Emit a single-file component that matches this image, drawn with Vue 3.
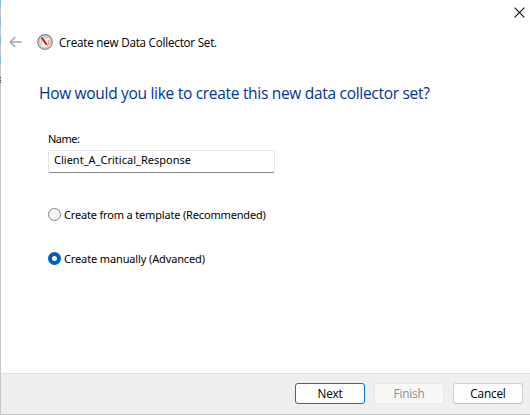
<script setup>
import { ref } from 'vue'

const name = ref('Client_A_Critical_Response')
const mode = ref('manual')
const options = [
  { id: 'template', label: 'Create from a template (Recommended)' },
  { id: 'manual', label: 'Create manually (Advanced)' },
]
</script>

<template>
  <div class="window">
    <div class="edge"></div>
    <main class="dialog">
      <div class="titlebar">
        <svg class="close" width="11" height="11" viewBox="0 0 11 11"><path d="M.6.6l9.8 9.8M10.4.6L.6 10.4" /></svg>
      </div>
      <header class="header">
        <svg class="back" width="13" height="12" viewBox="0 0 13 12"><path d="M12.5 6H1.2M6.2 1L1.2 6l5 5" /></svg>
        <svg class="gauge" width="16" height="16" viewBox="0 0 16 16">
          <circle cx="8" cy="8" r="7.3" fill="#e2e2e2" stroke="#828282" stroke-width="1.2" />
          <circle cx="8" cy="8" r="5.4" fill="#fffdfa" stroke="#b9b4ae" stroke-width=".8" />
          <path d="M4.3 10.8V6.2M6.8 4h3.1" fill="none" stroke="#c9a79a" stroke-width=".9" />
          <path d="M11.8 6.2v3.3l-1.6 1.8" fill="none" stroke="#ec8b4c" stroke-width="1.2" />
          <path d="M3.6 3.8l2.1-.5 4.8 7-1.7.9z" fill="#d40d12" />
        </svg>
        <span class="title">Create new Data Collector Set.</span>
      </header>
      <section class="body">
        <h1>How would you like to create this new data collector set?</h1>
        <label class="name" for="set-name">Name:</label>
        <input id="set-name" v-model="name" class="field" type="text" spellcheck="false" />
        <div class="options">
          <label v-for="o in options" :key="o.id" class="option">
            <input v-model="mode" type="radio" name="mode" :value="o.id" class="radio" />
            <span :class="['caption', o.id]">{{ o.label }}</span>
          </label>
        </div>
      </section>
      <footer class="footer">
        <button class="btn primary">Next</button>
        <button class="btn finish" disabled>Finish</button>
        <button class="btn">Cancel</button>
      </footer>
    </main>
  </div>
</template>

<style>
body { margin: 0; overflow: hidden; background: #fff; }
</style>

<style scoped>
.window { display: flex; width: 530px; height: 415px; box-sizing: border-box; background: #fff; font-family: "Noto Sans", "Open Sans", sans-serif; color: #000; }
.edge { width: 1px; background: linear-gradient(#85b9d5 0 7px, #c8c8c8 7px 17px, #85b9d5 17px 26px, #c8c8c8 26px 36px, #85b9d5 36px 45px, #c8c8c8 45px 55px, #85b9d5 55px 64px, #c8c8c8 64px 77px, #513a35 77px 78px, #c8c8c8 78px 79px, #b68c59 79px 80px, #513a35 80px 81px, #c8c8c8 81px 82px, #513a35 82px 83px, #c8c8c8 83px); }
.dialog { flex: 1; display: flex; flex-direction: column; }
.titlebar { height: 27px; display: flex; justify-content: flex-end; box-sizing: border-box; padding: 7px 5px 0 0; }
.close path { stroke: #111; stroke-width: 1.15; fill: none; }
.header { display: flex; align-items: center; height: 30px; padding-left: 8px; }
.back path { stroke: #a6a6a6; stroke-width: 1.5; fill: none; }
.gauge { margin-left: 15px; }
.title { margin-left: 6px; font-family: "Open Sans", "Noto Sans", sans-serif; font-size: 11.7px; line-height: 16px; letter-spacing: -.24px; white-space: nowrap; }
.body { flex: 1; display: flex; flex-direction: column; align-items: flex-start; padding: 24px 0 0 38px; }
h1 { margin: 0; font-family: "Open Sans", "Noto Sans", sans-serif; font-size: 15.5px; line-height: 24px; height: 24px; font-weight: 400; color: #003399; letter-spacing: -.3px; white-space: nowrap; }
.name { margin: 26px 0 0 9px; font-size: 11px; line-height: 16px; letter-spacing: -.5px; }
.field { box-sizing: border-box; width: 227px; height: 23px; margin: 3px 0 0 9px; border: 1px solid #e5e5e5; border-bottom-color: #868686; border-radius: 2px; padding: 0 5px 4px; font: 11px "Noto Sans", "Open Sans", sans-serif; letter-spacing: .01px; color: #000; background: #fff; outline: none; }
.options { display: flex; flex-direction: column; gap: 28px; margin: 34px 0 0 9px; }
.option { display: flex; align-items: center; height: 16px; }
.radio { appearance: none; box-sizing: border-box; width: 13px; height: 13px; margin: -1px 0 0; border: 1px solid #858585; border-radius: 50%; background: #f3f3f3; }
.radio:checked { border: 4px solid #005fb8; background: #fff; }
.caption { margin-left: 3px; font-size: 11px; line-height: 16px; letter-spacing: -.17px; white-space: nowrap; }
.caption.manual { letter-spacing: -.13px; }
.footer { display: flex; justify-content: flex-end; gap: 9px; box-sizing: border-box; height: 42px; padding: 9px 7px 0 0; background: #efefef; border-top: 1px solid #dfdfdf; border-bottom: 1px solid #c4c4c4; }
.btn { box-sizing: border-box; width: 70px; height: 21px; border: 1px solid #d0d0d0; border-bottom-color: #bcbcbc; border-radius: 3px; background: #fdfdfd; padding: 0; font: 11.8px/17px "Open Sans", "Noto Sans", sans-serif; letter-spacing: -.2px; color: #000; }
.primary { border-color: #0078d4; }
.finish { color: #8c8c8c; border-color: #e8e8e8; background: #f8f8f8; }
</style>
